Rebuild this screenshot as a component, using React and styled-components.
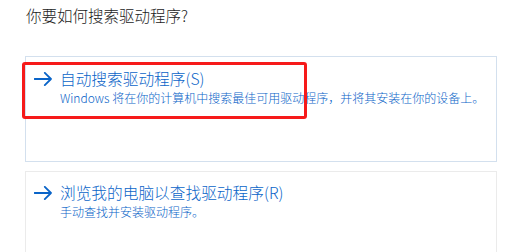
import React from "react";
import styled, { createGlobalStyle } from "styled-components";

const Global = createGlobalStyle`
  html, body { margin: 0; padding: 0; background: #ffffff; }
  body { font-family: "Noto Sans CJK SC", "Noto Sans", sans-serif; }
`;

const Page = styled.div`
  position: relative;
  width: 514px;
  height: 252px;
  overflow: hidden;
  box-sizing: border-box;
  padding: 4px 17px 0 25px;
  display: flex;
  flex-direction: column;
`;

const Heading = styled.h1`
  margin: 0 0 0 1px;
  font-size: 15.5px;
  line-height: 22px;
  font-weight: 300;
  color: #1b1b1b;
`;

const Cards = styled.div`
  margin-top: 30px;
  display: flex;
  flex-direction: column;
  gap: 9px;
`;

const Card = styled.div`
  box-sizing: border-box;
  height: ${(p) => p.$h}px;
  border: 1px solid ${(p) => (p.$active ? "#d3e0ee" : "#ebebeb")};
  background: #ffffff;
  padding: ${(p) => p.$pt}px 8px 0 8px;
  display: flex;
  align-items: flex-start;
  gap: 8px;
`;

const ArrowBox = styled.span`
  display: flex;
  align-items: center;
  height: 22px;
  color: #0a64c8;
`;

const TextCol = styled.div`
  display: flex;
  flex-direction: column;
`;

const Title = styled.div`
  font-size: 15.7px;
  line-height: 22px;
  font-weight: 300;
  color: #0a64c8;
`;

const Desc = styled.div`
  font-size: 12px;
  line-height: 15px;
  font-weight: 300;
  color: #0a64c8;
  white-space: nowrap;
`;

const Highlight = styled.div`
  position: absolute;
  left: 22px;
  top: 62px;
  width: 285px;
  height: 57px;
  box-sizing: border-box;
  border: 3px solid #f61a1a;
  border-radius: 3px;
  pointer-events: none;
`;

const Arrow = () => (
  <svg width="18" height="14" viewBox="0 0 18 14" fill="none">
    <path
      d="M0.5 7 H17 M10.8 0.8 L17 7 L10.8 13.2"
      stroke="currentColor"
      strokeWidth="1.8"
      strokeLinecap="round"
      strokeLinejoin="round"
    />
  </svg>
);

const Option = ({ title, desc, active, h, pt }) => (
  <Card $active={active} $h={h} $pt={pt}>
    <ArrowBox>
      <Arrow />
    </ArrowBox>
    <TextCol>
      <Title>{title}</Title>
      <Desc>{desc}</Desc>
    </TextCol>
  </Card>
);

export default function App() {
  return (
    <>
      <Global />
      <Page>
        <Heading>你要如何搜索驱动程序?</Heading>
        <Cards>
          <Option
            active
            h={106}
            pt={11}
            title="自动搜索驱动程序(S)"
            desc="Windows 将在你的计算机中搜索最佳可用驱动程序，并将其安装在你的设备上。"
          />
          <Option
            h={110}
            pt={10}
            title="浏览我的电脑以查找驱动程序(R)"
            desc="手动查找并安装驱动程序。"
          />
        </Cards>
        <Highlight />
      </Page>
    </>
  );
}
